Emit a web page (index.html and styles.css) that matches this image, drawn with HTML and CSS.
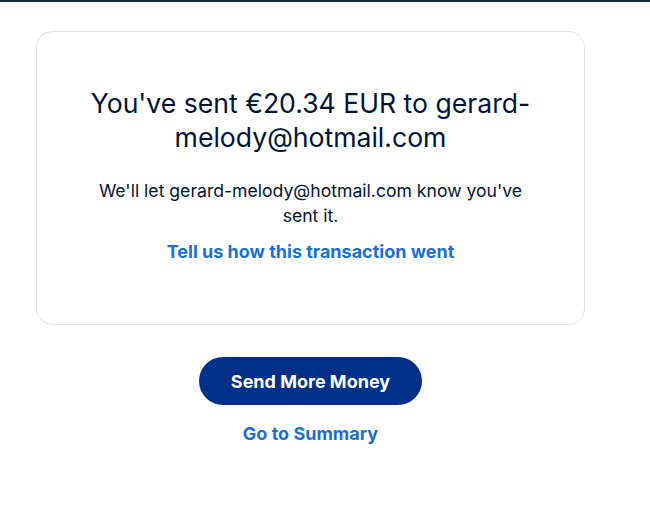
FILE: index.html
```html
<!DOCTYPE html>
<html>
<head>
<meta charset="utf-8">
<link rel="stylesheet" href="styles.css">
</head>
<body>
<div class="topbar"></div>
<main class="page">
  <section class="card">
    <h1 class="title">You've sent €20.34 EUR to gerard-melody@hotmail.com</h1>
    <p class="note">We'll let gerard-melody@hotmail.com know you've sent it.</p>
    <a class="link" href="#">Tell us how this transaction went</a>
  </section>
  <div class="actions">
    <a class="btn" href="#">Send More Money</a>
    <a class="link" href="#">Go to Summary</a>
  </div>
</main>
</body>
</html>
```
FILE: styles.css
```css
html, body {
  margin: 0;
  padding: 0;
  background: #ffffff;
  font-family: "Inter", "Liberation Sans", sans-serif;
  color: #001435;
}
.topbar {
  height: 2px;
  background: #1c2b4f;
}
.page {
  width: 549px;
  margin-left: 36px;
  padding-top: 29px;
}
.card {
  border: 1px solid #e2e2e2;
  border-radius: 16px;
  padding: 54px 50px 60px;
  display: flex;
  flex-direction: column;
  align-items: center;
  text-align: center;
}
.title {
  margin: 0;
  font-size: 26.6px;
  font-weight: 400;
  line-height: 34px;
  letter-spacing: 0;
}
.note {
  margin: 24px 0 0;
  font-size: 17.6px;
  line-height: 25px;
  padding: 0 4px;
}
.link {
  color: #1a6fd6;
  font-weight: 700;
  font-size: 18px;
  text-decoration: none;
  line-height: 24px;
}
.card .link {
  margin-top: 12px;
}
.actions {
  display: flex;
  flex-direction: column;
  align-items: center;
  padding-top: 32px;
  gap: 17px;
}
.btn {
  display: flex;
  align-items: center;
  justify-content: center;
  width: 223px;
  height: 48px;
  border-radius: 24px;
  background: #003087;
  color: #ffffff;
  font-weight: 700;
  font-size: 18px;
  text-decoration: none;
}
```
